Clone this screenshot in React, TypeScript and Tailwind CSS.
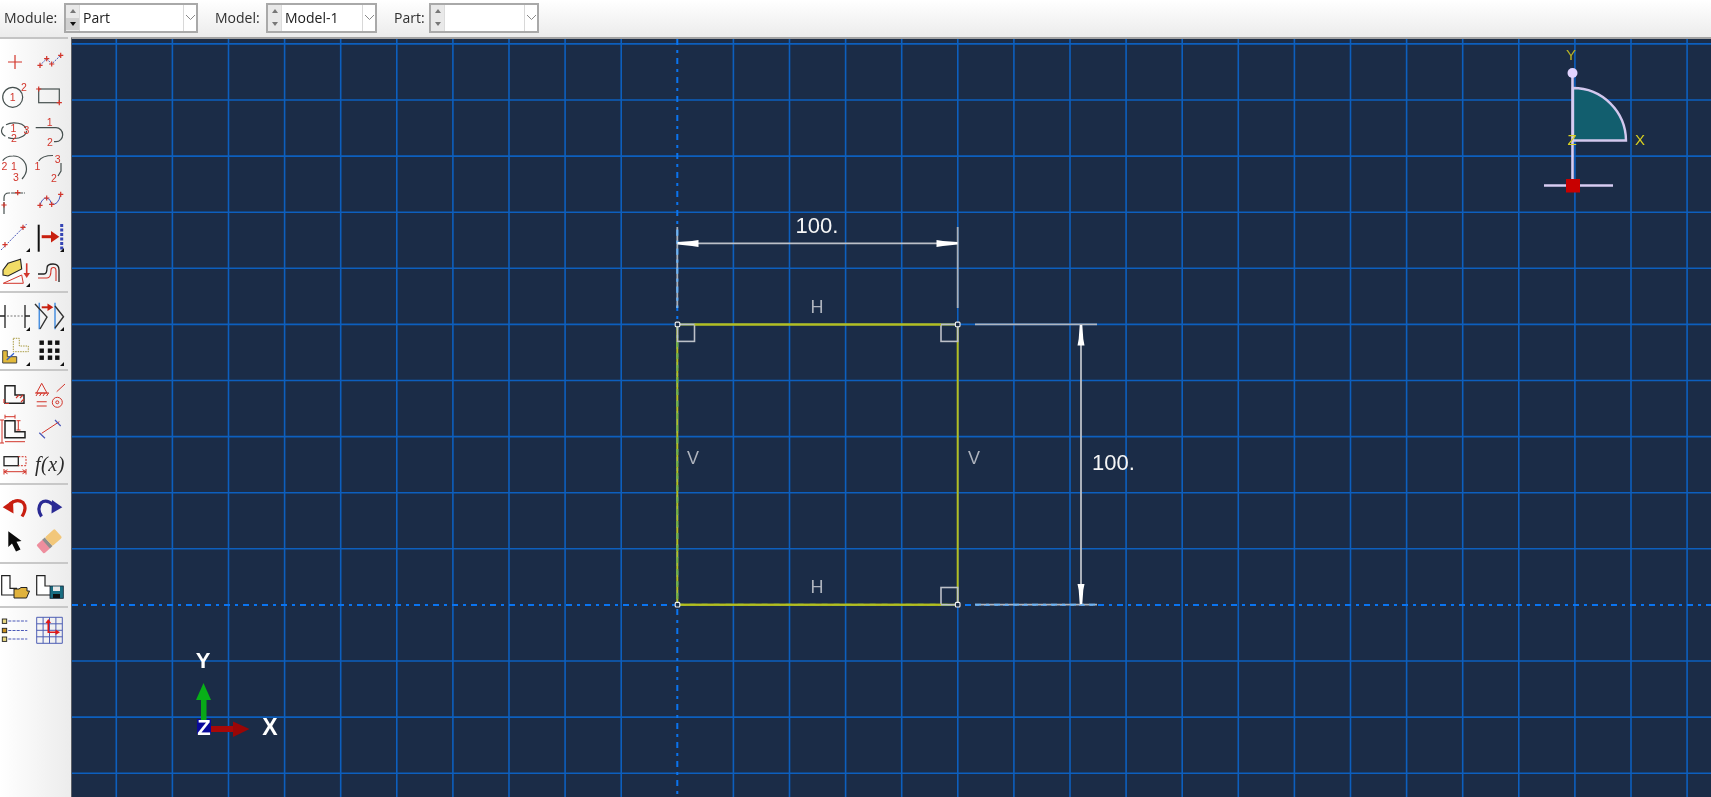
import React from "react";

const RED = "#d2352b";
const DK = "#46504f";
const BL = "#4a58b8";

const P = ({ x, y, s = 2.6 }: { x: number; y: number; s?: number }) => (
  <path d={`M${x - s} ${y}H${x + s}M${x} ${y - s}V${y + s}`} stroke={RED} strokeWidth="1.2" fill="none" />
);
const Mark = ({ y = 33 }: { y?: number }) => <polygon points={`26,${y} 30,${y} 30,${y - 4}`} fill="#111" />;
const T = ({ x, y, c }: { x: number; y: number; c: string }) => (
  <text x={x} y={y} fontSize="10.5" fill={RED} textAnchor="middle" dominantBaseline="central" fontFamily="'Liberation Sans', sans-serif">
    {c}
  </text>
);
const Ic = ({ h, children }: { h: number; children?: React.ReactNode }) => (
  <svg width="34" height={h} viewBox={`0 0 34 ${h}`} fill="none" className="block overflow-visible">
    {children}
  </svg>
);

const groups: { h: number; rows: [React.ReactNode, React.ReactNode][] }[] = [
  {
    h: 35,
    rows: [
      [
        <P x={15} y={18} s={7} />,
        <>
          <path d="M6 21.3L12.7 14.7L17.7 20L26.7 11.3" stroke={BL} strokeDasharray="2 1" />
          <P x={6} y={21.3} /><P x={12.7} y={14.7} /><P x={17.7} y={20} /><P x={26.7} y={11.3} />
        </>,
      ],
      [
        <>
          <circle cx="12.7" cy="18.3" r="10" stroke={DK} strokeWidth="1.2" />
          <T x={12.7} y={18.3} c="1" /><T x={24} y={7.6} c="2" />
        </>,
        <>
          <rect x="4.7" y="10" width="20.6" height="13.7" stroke={DK} strokeWidth="1.2" />
          <P x={4.7} y={10} /><P x={25.3} y={23.7} />
        </>,
      ],
      [
        <>
          <ellipse cx="14" cy="16.7" rx="12.5" ry="7.8" stroke={DK} strokeWidth="1.2" strokeDasharray="22 3 12 3" />
          <T x={13.5} y={13.5} c="1" /><T x={26.5} y={15.5} c="3" /><T x={14} y={23.5} c="2" />
        </>,
        <>
          <path d="M1.7 13.7H22A6.7 7 0 0 1 22 27.7H20" stroke={DK} strokeWidth="1.2" />
          <T x={15.7} y={7.5} c="1" /><T x={16} y={28} c="2" />
        </>,
      ],
      [
        <>
          <path d="M2.7 11.7Q6 7 13 7A13 13 0 0 1 26.5 20Q26.5 25 22 30" stroke={DK} strokeWidth="1.2" />
          <T x={4.5} y={17} c="2" /><T x={14} y={17} c="1" /><T x={16} y={28} c="3" />
        </>,
        <>
          <path d="M4.7 12Q8 6.5 19 6.5M27 14V22L24 27" stroke={DK} strokeWidth="1.2" />
          <T x={3.3} y={17} c="1" /><T x={23.7} y={10} c="3" /><T x={20} y={28.7} c="2" />
        </>,
      ],
      [
        <>
          <path d="M4 30V14Q4 9 9 9H25" stroke={DK} strokeWidth="1.2" strokeDasharray="12 1" />
          <P x={4} y={21} /><P x={17.7} y={8.7} />
        </>,
        <>
          <path d="M6 21.3Q8 14 12.7 14Q16 14 17.7 20Q24 22 26.7 10.3" stroke={BL} />
          <P x={6} y={21.3} /><P x={12.7} y={14} /><P x={17.7} y={20.3} /><P x={26.7} y={10.3} />
        </>,
      ],
      [
        <>
          <path d="M1 31L26.7 5" stroke={BL} strokeDasharray="2 1.2" />
          <P x={5} y={25.7} /><P x={23} y={8.3} /><Mark />
        </>,
        <>
          <path d="M4.7 5.7V32.7" stroke="#111" strokeWidth="2" />
          <path d="M7.7 17.7H18" stroke="#c8200f" strokeWidth="3" />
          <polygon points="17,12 25.3,17.7 17,23.4" fill="#c8200f" />
          <path d="M27.7 5V31" stroke="#3444b4" strokeWidth="3" strokeDasharray="3 1.5" />
          <Mark />
        </>,
      ],
      [
        <>
          <polygon points="3,16 8,9.3 20.5,5.3 21.7,15 8,22 3,21" fill="#f2dc66" stroke="#222" strokeWidth="1.1" />
          <polygon points="3.3,29.3 21.7,21 23.3,29.3" stroke={RED} />
          <path d="M26.7 9.3V20" stroke={RED} strokeWidth="1.6" />
          <polygon points="23.5,19 30,19 26.7,24" fill={RED} />
          <Mark />
        </>,
        <>
          <path d="M4 20H10Q13 20 13 14Q13 10 19 10Q25 10 25 16V28" stroke="#222" strokeWidth="1.3" />
          <path d="M4 24H13Q17 24 17 16Q17 13.5 19.5 13.5Q22 13.5 22 17V27" stroke={RED} strokeWidth="1.1" />
        </>,
      ],
    ],
  },
  {
    h: 33,
    rows: [
      [
        <>
          <path d="M5 5V28M25 5V28M0 16H5M25 16H30" stroke="#222" strokeWidth="1.3" />
          <path d="M7 16H23" stroke="#777" strokeDasharray="2 1.5" />
          <Mark y={31} />
        </>,
        <>
          <path d="M5.3 2.7V29.3M21 2.7V29.3" stroke="#4a90e0" strokeWidth="1.5" />
          <path d="M1 4L13 17L6 29M21 6L29.5 16.7L21 28" stroke="#333" strokeWidth="1.4" />
          <path d="M7.7 7.3H14" stroke="#c8200f" strokeWidth="2" />
          <polygon points="13.5,3.5 19.3,7.3 13.5,11" fill="#c8200f" />
          <Mark y={31} />
        </>,
      ],
      [
        <>
          <polygon points="13.3,5.3 19.3,5.3 19.3,13 28.3,13 28.3,18.7 13.3,18.7" stroke="#a89a40" strokeDasharray="1.5 1" />
          <polygon points="2.7,17.7 7.3,17.7 7.3,23.7 16.7,23.7 16.7,30 2.7,30" fill="#e2b93a" stroke="#444" />
          <path d="M6.7 27L14 20.3" stroke="#3060d0" strokeWidth="1.2" />
          <Mark y={33} />
        </>,
        <>
          {[7.7, 16, 23.3].map((x) =>
            [9.7, 17.7, 24.7].map((y) => <rect key={`${x}-${y}`} x={x - 2.2} y={y - 2.2} width="4.4" height="4.4" fill="#111" />)
          )}
          <Mark y={33} />
        </>,
      ],
    ],
  },
  {
    h: 34,
    rows: [
      [
        <>
          <polygon points="5,7.7 15,7.7 15,17 24,17 24,25.3 5,25.3" stroke="#222" strokeWidth="1.5" />
          <path d="M4 21V25M5 25.5H9M16 20L19 17M20 20L23 17M21 24L24 21" stroke={RED} strokeWidth="1.1" />
        </>,
        <>
          <path d="M7.7 5.3L2.5 15H13ZM1 15H15M2 18L4 15M5.5 18L7.5 15M9 18L11 15M12.5 18L14.5 15" stroke={RED} />
          <path d="M2.7 23.7H12.7M2.7 28H12.7" stroke={RED} strokeWidth="1.1" />
          <circle cx="23.3" cy="24.3" r="5" stroke={RED} />
          <circle cx="23.3" cy="24.3" r="1.5" stroke={RED} />
          <path d="M22.7 13.7L31 6" stroke={RED} />
        </>,
      ],
      [
        <>
          <polygon points="5,8.7 15,8.7 15,19.7 25,19.7 25,25.7 5,25.7" stroke="#222" strokeWidth="1.5" />
          <path d="M5 4.7H15M18.3 8.7V18M2 8V31M5 29.7H25M5 2.7V6.7M15 2.7V6.7M0 8H4M0 31H4M16.5 8.7H20.5M16.5 18H20.5" stroke={RED} strokeWidth="1" />
        </>,
        <>
          <path d="M7.7 21.3L25.3 9.7" stroke={RED} />
          <path d="M5.3 20.7L11 26.3M21 8L26.7 14" stroke={BL} strokeWidth="1.2" />
        </>,
      ],
      [
        <>
          <rect x="4" y="10.7" width="14.3" height="9" stroke="#222" strokeWidth="1.3" />
          <path d="M18.3 10.7H26V19.7H18.3" stroke={RED} strokeDasharray="2 1.3" />
          <path d="M4 25.7H26M4 23V28.5M26 23V28.5M4 25.7L7.5 23.7M4 25.7L7.5 27.7M26 25.7L22.5 23.7M26 25.7L22.5 27.7" stroke={RED} strokeWidth="1" />
        </>,
        <text x="16" y="17.5" textAnchor="middle" dominantBaseline="central" fontSize="20" fontStyle="italic" fill="#2a2a2a" fontFamily="'Liberation Serif', serif" letterSpacing="0.6">
          f(x)
        </text>,
      ],
    ],
  },
  {
    h: 35,
    rows: [
      [
        <>
          <path d="M10 15Q17 9 23 13.5Q27.5 19 22 27.5" stroke="#c81e10" strokeWidth="3.2" />
          <polygon points="2.7,18.3 13,11 13.5,24.5" fill="#c81e10" />
        </>,
        <>
          <path d="M7.5 27.5Q2.5 20 7 14Q12 9.5 19 15.5" stroke="#2a2a94" strokeWidth="3.2" />
          <polygon points="28.3,18.3 18,11 17.5,24.5" fill="#2a2a94" />
        </>,
      ],
      [
        <polygon points="8.3,7.3 8.3,23 12,19.4 16,27.5 20.5,25.5 16.5,17.7 21.5,17" fill="#0a0a0a" />,
        <g transform="rotate(-42 15.3 17.3)">
          <rect x="3" y="11.5" width="9" height="11.5" rx="1.5" fill="#ee8e9e" />
          <rect x="11" y="11.5" width="3.5" height="11.5" fill="#8d8d8d" />
          <rect x="14.5" y="11.5" width="13" height="11.5" rx="1.5" fill="#f2c77a" />
        </g>,
      ],
    ],
  },
  {
    h: 35,
    rows: [
      [
        <>
          <path d="M15 27H1.7V7.7H10V20.3H17" stroke="#222" strokeWidth="1.2" fill="#fff" />
          <path d="M14 21H19L21 19.5H27V23L29.5 23L26.5 30H14Z" fill="#e0b23c" stroke="#222" strokeWidth="1" />
        </>,
        <>
          <path d="M16 27H2.7V7.7H11V18H16" stroke="#222" strokeWidth="1.2" fill="#fff" />
          <rect x="16" y="18" width="13.3" height="12.3" fill="#1a6e82" stroke="#123" strokeWidth="0.8" />
          <rect x="19" y="18.5" width="7" height="4.5" fill="#e8e8e8" />
          <rect x="19" y="26" width="7" height="4" fill="#111" />
        </>,
      ],
    ],
  },
  {
    h: 35,
    rows: [
      [
        <>
          <rect x="2.3" y="7" width="4.4" height="4.4" fill="#e8d880" stroke="#222" strokeWidth="0.9" />
          <rect x="2.3" y="16.3" width="4.4" height="4.4" fill="#c89020" stroke="#222" strokeWidth="0.9" />
          <rect x="2.3" y="25" width="4.4" height="4.4" fill="#e8d880" stroke="#222" strokeWidth="0.9" />
          <path d="M8.3 9H27.3M8.3 18.5H27.3M8.3 27H27.3" stroke={BL} strokeDasharray="3 1.2" strokeWidth="1.1" />
        </>,
        <>
          <path d="M2.7 5.3H28.3V31.3H2.7ZM2.7 11.8H28.3M2.7 18.3H28.3M2.7 24.8H28.3M9.1 5.3V31.3M15.5 5.3V31.3M21.9 5.3V31.3" stroke="#4e5eb4" strokeWidth="1" />
          <path d="M14.3 10V20.3H22" stroke="#e01818" strokeWidth="1.6" />
          <polygon points="11.5,11 17,11 14.3,7" fill="#e01818" />
          <polygon points="21.5,17.5 21.5,23 26,20.3" fill="#e01818" />
        </>,
      ],
    ],
  },
];

const Combo = ({ w, value, active }: { w: string; value: string; active?: boolean }) => (
  <div className={`${w} h-[30px] flex border-2 border-[#a9a9a9] bg-white`}>
    <div className="w-[14px] flex flex-col items-center justify-center gap-[1px] bg-[#e9e9e9] py-[1px] border-r border-[#dcdcdc]">
      <div className="flex-1 w-full flex items-center justify-center">
        <div className="w-0 h-0 border-l-[3px] border-r-[3px] border-b-[4px] border-l-transparent border-r-transparent border-b-[#777]" />
      </div>
      <div className={`flex-1 w-full flex items-center justify-center ${active ? "bg-[#d0d0d0]" : ""}`}>
        <div className={`w-0 h-0 border-l-[3px] border-r-[3px] border-t-[4px] border-l-transparent border-r-transparent ${active ? "border-t-[#111]" : "border-t-[#777]"}`} />
      </div>
    </div>
    <div className="flex-1 pl-[3px] text-[14px] leading-[25px] text-[#202020]">{value}</div>
    <div className="w-[13px] flex items-center justify-center border-l border-[#d8d8d8] bg-white">
      <svg width="11" height="7" viewBox="0 0 11 7" fill="none">
        <path d="M1 1L5.5 5.5L10 1" stroke="#8a8a8a" strokeWidth="1" />
      </svg>
    </div>
  </div>
);

const gridV = Array.from({ length: 29 }, (_, i) => 116.3 + i * 56.1).filter((x) => Math.abs(x - 677.3) > 1);
const gridH = Array.from({ length: 14 }, (_, i) => 43.9 + i * 56.1).filter((y) => Math.abs(y - 604.9) > 1);
const SANS = "'Liberation Sans', sans-serif";
const GRID = "#0d5fbe";
const AXIS = "#0a74f0";
const WHITE_D = "#bcc0c8";

export default function App() {
  return (
    <div className="w-[1711px] h-[797px] overflow-hidden flex flex-col bg-white font-['Open_Sans','Liberation_Sans',sans-serif] blur-[0.4px]">
      <div className="h-[37px] shrink-0 flex items-center pb-[2px] pl-[4px] bg-gradient-to-b from-white to-[#ececec] text-[14px] text-[#303030]">
        <span className="w-[60px]">Module:</span>
        <Combo w="w-[134px]" value="Part" active />
        <span className="ml-[17px] w-[51px]">Model:</span>
        <Combo w="w-[111px]" value="Model-1" />
        <span className="ml-[17px] w-[35px]">Part:</span>
        <Combo w="w-[110px]" value="" />
      </div>
      <div className="flex flex-1 min-h-0">
        <div className="w-[71px] shrink-0 bg-gradient-to-r from-white to-[#ececec]">
          <div className="w-[68px] h-[2px] bg-[#c4c4c4]" />
          <div className="pt-[5px] flex flex-col">
            {groups.map((g, i) => (
              <div key={i} className="flex flex-col">
                {i > 0 && <div className={`w-[68px] h-[2px] bg-[#c8c8c8] ${i === 1 ? "mt-[2px] mb-[7px]" : i === 2 ? "mt-[3px] mb-[7px]" : "mt-[3px] mb-[4px]"}`} />}
                {g.rows.map((r, j) => (
                  <div key={j} className="flex">
                    <Ic h={g.h}>{r[0]}</Ic>
                    <Ic h={g.h}>{r[1]}</Ic>
                  </div>
                ))}
              </div>
            ))}
          </div>
        </div>
        <div className="flex-1 min-w-0 bg-[#1b2c47] border-l border-[#5c6068] border-t-2 border-t-[#a3a3a3]">
          <svg width="1639" height="758" viewBox="72 39 1639 758" fill="none" className="block">
            {gridV.map((x) => (
              <line key={x} x1={x} x2={x} y1="39" y2="797" stroke={GRID} strokeWidth="1.6" />
            ))}
            {gridH.map((y) => (
              <line key={y} x1="72" x2="1711" y1={y} y2={y} stroke={GRID} strokeWidth="1.6" />
            ))}
            <line x1="677.3" x2="677.3" y1="39" y2="797" stroke={AXIS} strokeWidth="2" strokeDasharray="6 5 3 5" />
            <line x1="72" x2="1711" y1="604.9" y2="604.9" stroke={AXIS} strokeWidth="2" strokeDasharray="6 5 3 5" />

            {/* sketch */}
            <path d="M677.3 604.7V324.4H957.7V604.7H677.3" stroke="#b4bd1e" strokeWidth="2" />
            <path d="M677.3 341V604.7H957.7" stroke="#6fb04a" strokeWidth="2" strokeDasharray="6 6" />
            <path d="M677.3 227V308M957.7 227V308" stroke="#a8afba" strokeWidth="1.8" />
            <path d="M677.3 230V308" stroke="#6cb4f4" strokeWidth="1.8" strokeDasharray="6 5 3 5" />
            <path d="M975 324.4H1097M975 604.7H1097" stroke="#aeb5c0" strokeWidth="1.8" />
            <path d="M975 604.7H1097" stroke="#6cb4f4" strokeWidth="1.8" strokeDasharray="6 5 3 5" />
            <path d="M690 243.3H946" stroke={WHITE_D} strokeWidth="1.8" />
            <path d="M1081 338V590" stroke={WHITE_D} strokeWidth="1.8" />
            <path d="M677.5 242L692 241L698.5 240V247L692 246L677.5 244.6Z" fill="#fff" />
            <path d="M957.5 242L943 241L936.5 240V247L943 246L957.5 244.6Z" fill="#fff" />
            <path d="M1079.7 325L1078.7 339L1077.5 345.5H1084.5L1083.3 339L1082.3 325Z" fill="#fff" />
            <path d="M1079.7 604L1078.7 590L1077.5 584H1084.5L1083.3 590L1082.3 604Z" fill="#fff" />
            <rect x="677.5" y="324.4" width="17" height="17" stroke="#bcc0c8" strokeWidth="1.6" />
            <rect x="941" y="324.4" width="16.7" height="17" stroke="#bcc0c8" strokeWidth="1.6" />
            <rect x="941" y="587.5" width="16.7" height="17.2" stroke="#bcc0c8" strokeWidth="1.6" />
            <path d="M694.5 324.4H941M941 604.7H677.3" stroke="#b4bd1e" strokeWidth="2" />
            {[[677.5, 324.4], [957.7, 324.4], [677.5, 604.7], [957.7, 604.7]].map(([x, y]) => (
              <rect key={`${x}-${y}`} x={x - 2.3} y={y - 2.3} width="4.6" height="4.6" rx="1" fill="#1b2c47" stroke="#f2f2f2" strokeWidth="1.1" />
            ))}
            <text x="817" y="225" textAnchor="middle" dominantBaseline="central" fontSize="22" fill="#f6f6f6" fontFamily={SANS}>100.</text>
            <text x="1113.5" y="462" textAnchor="middle" dominantBaseline="central" fontSize="22" fill="#f6f6f6" fontFamily={SANS}>100.</text>
            <text x="817" y="307" textAnchor="middle" dominantBaseline="central" fontSize="18" fill="#aeb3bd" fontFamily={SANS}>H</text>
            <text x="817" y="586.5" textAnchor="middle" dominantBaseline="central" fontSize="18" fill="#aeb3bd" fontFamily={SANS}>H</text>
            <text x="693" y="458" textAnchor="middle" dominantBaseline="central" fontSize="18" fill="#aeb3bd" fontFamily={SANS}>V</text>
            <text x="974" y="458" textAnchor="middle" dominantBaseline="central" fontSize="18" fill="#aeb3bd" fontFamily={SANS}>V</text>

            {/* view triad */}
            <path d="M1573 88A53 53 0 0 1 1626 140.5H1573Z" fill="#125e6e" stroke="#d3c8ee" strokeWidth="2.4" />
            <line x1="1572.5" x2="1572.5" y1="73" y2="185" stroke="#d8ccf2" strokeWidth="2.6" />
            <circle cx="1572.5" cy="73" r="5" fill="#e2d4ff" />
            <line x1="1544" x2="1613" y1="185.5" y2="185.5" stroke="#d8ccf2" strokeWidth="2.6" />
            <rect x="1566" y="179" width="14" height="13.5" fill="#c80000" />
            <text x="1571" y="54" textAnchor="middle" dominantBaseline="central" fontSize="15" fill="#b8b424" fontFamily={SANS}>Y</text>
            <text x="1572" y="139" textAnchor="middle" dominantBaseline="central" fontSize="15" fill="#d8d020" fontFamily={SANS}>Z</text>
            <text x="1640" y="139" textAnchor="middle" dominantBaseline="central" fontSize="15" fill="#d8d020" fontFamily={SANS}>X</text>

            {/* csys */}
            <rect x="197" y="719" width="14" height="15" fill="#0a0a9a" />
            <rect x="201" y="697" width="5.5" height="24" fill="#08a818" />
            <polygon points="203.5,683 211,700 196,700" fill="#08b018" />
            <rect x="211" y="726" width="23" height="6" fill="#a80808" />
            <polygon points="233,721.5 249.5,729 233,737" fill="#9a0606" />
            <text x="203" y="660" textAnchor="middle" dominantBaseline="central" fontSize="22" fontWeight="700" fill="#fff" fontFamily={SANS}>Y</text>
            <text x="204" y="727" textAnchor="middle" dominantBaseline="central" fontSize="22" fontWeight="700" fill="#fff" fontFamily={SANS}>Z</text>
            <text x="270" y="727" textAnchor="middle" dominantBaseline="central" fontSize="23" fontWeight="700" fill="#fff" fontFamily={SANS}>X</text>
          </svg>
        </div>
      </div>
    </div>
  );
}
